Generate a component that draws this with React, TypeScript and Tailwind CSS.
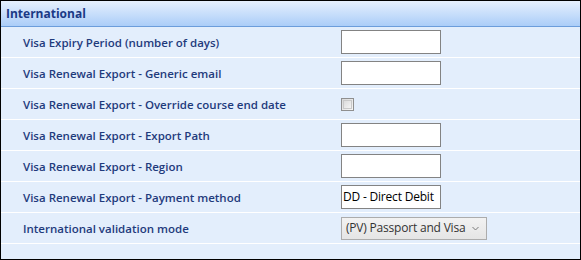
import React from "react";

const rows = [
  { label: "Visa Expiry Period (number of days)", kind: "input", value: "" },
  { label: "Visa Renewal Export - Generic email", kind: "input", value: "" },
  { label: "Visa Renewal Export - Override course end date", kind: "check", value: "" },
  { label: "Visa Renewal Export - Export Path", kind: "input", value: "" },
  { label: "Visa Renewal Export - Region", kind: "input", value: "" },
  { label: "Visa Renewal Export - Payment method", kind: "input", value: "DD - Direct Debit" },
  { label: "International validation mode", kind: "select", value: "(PV) Passport and Visa" },
];

export default function App() {
  return (
    <div
      className="w-[581px] h-[260px] border border-black bg-[#e3eefc] flex flex-col"
      style={{ fontFamily: '"Open Sans", "Noto Sans", sans-serif' }}
    >
      {/* Header */}
      <div className="h-[26px] shrink-0 flex items-center px-[5px] bg-gradient-to-b from-[#e6f0fd] to-[#abcdf8] border-b border-[#6c9ddb]">
        <span className="text-[12px] font-bold text-[#1b3a86] leading-none">International</span>
      </div>

      {rows.map((row, i) => (
        <div key={i} className="h-[31px] shrink-0 flex items-center border-b border-white">
          <div className="w-[340px] pl-[22px] pt-[1px] text-[11.5px] font-semibold text-[#1f3b7c] leading-none whitespace-nowrap">
            {row.label}
          </div>
          {row.kind === "input" && (
            <div className="w-[100px] h-[24px] bg-white border border-[#838383] flex items-center px-[1px] text-[12px] text-black leading-none whitespace-nowrap overflow-hidden tracking-[-0.2px]">
              {row.value}
            </div>
          )}
          {row.kind === "check" && (
            <div className="w-[13px] h-[13px] border border-[#8f8f8f] bg-gradient-to-br from-[#d9d9d9] to-[#f7f7f7] p-[1px]">
              <div className="w-full h-full border border-[#c9c9c9] bg-gradient-to-br from-[#dcdcdc] to-[#f4f4f4]" />
            </div>
          )}
          {row.kind === "select" && (
            <div className="w-[146px] h-[23px] border border-[#acacac] bg-gradient-to-b from-[#f2f2f2] to-[#e5e5e5] flex items-center justify-between pl-[4px] pr-[7px] text-[12px] text-[#333] leading-none whitespace-nowrap tracking-[-0.2px]">
              <span>{row.value}</span>
              <svg width="7" height="5" viewBox="0 0 7 5" className="mt-[1px]">
                <path d="M0.5 1 L3.5 4 L6.5 1" fill="none" stroke="#7a7a7a" strokeWidth="1" />
              </svg>
            </div>
          )}
        </div>
      ))}
      <div className="flex-1" />
    </div>
  );
}
